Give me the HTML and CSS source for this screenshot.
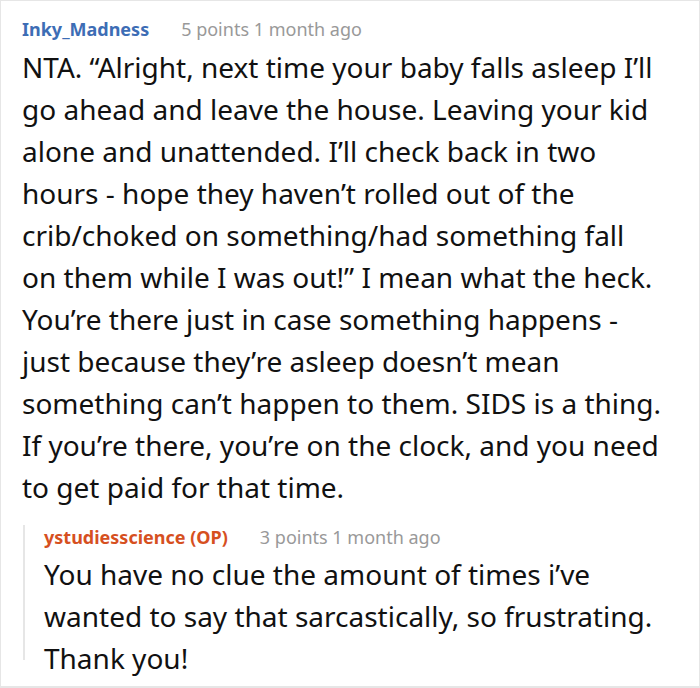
FILE: index.html
```html
<!DOCTYPE html>
<html lang="en">
<head>
<meta charset="utf-8">
<title>Comment</title>
<link rel="stylesheet" href="styles.css">
</head>
<body>
<div class="comment">
  <div class="meta-row">
    <span class="author">Inky_Madness</span>
    <span class="meta">5 points 1 month ago</span>
  </div>
  <p class="body-text">NTA. “Alright, next time your baby falls asleep I’ll go ahead and leave the house. Leaving your kid alone and unattended. I’ll check back in two hours - hope they haven’t rolled out of the crib/choked on something/had something fall on them while I was out!” I mean what the heck. You’re there just in case something happens - just because they’re asleep doesn’t mean something can’t happen to them. SIDS is a thing. If you’re there, you’re on the clock, and you need to get paid for that time.</p>
  <div class="reply">
    <div class="meta-row reply-head">
      <span class="author op">ystudiesscience (OP)</span>
      <span class="meta">3 points 1 month ago</span>
    </div>
    <p class="body-text">You have no clue the amount of times i’ve wanted to say that sarcastically, so frustrating. Thank you!</p>
  </div>
</div>
</body>
</html>
```

FILE: styles.css
```css
html, body {
  margin: 0;
  padding: 0;
  background: #fff;
}
.comment {
  box-sizing: border-box;
  width: 700px;
  height: 688px;
  border: 1px solid #e6e6e6;
  border-bottom-width: 2px;
  padding: 16px 34px 0 21px;
  font-family: "Noto Sans", "Open Sans", sans-serif;
  color: #111;
  overflow: hidden;
}
.meta-row {
  display: flex;
  align-items: baseline;
  font-size: 18px;
  line-height: 24px;
  white-space: nowrap;
}
.author {
  font-weight: 700;
  color: #3d6db5;
}
.author.op {
  color: #d6501f;
}
.meta {
  color: #999;
  margin-left: 32px;
}
.body-text {
  margin: 5px 0 0;
  font-size: 28px;
  line-height: 42px;
}
.reply {
  margin-top: 26px;
  margin-left: 1px;
  border-left: 2px solid #e6e6e6;
  padding-left: 19px;
  height: 135px;
}
.reply-head {
  margin-top: -9px;
}
.reply .body-text {
  margin-top: 4px;
}
```
